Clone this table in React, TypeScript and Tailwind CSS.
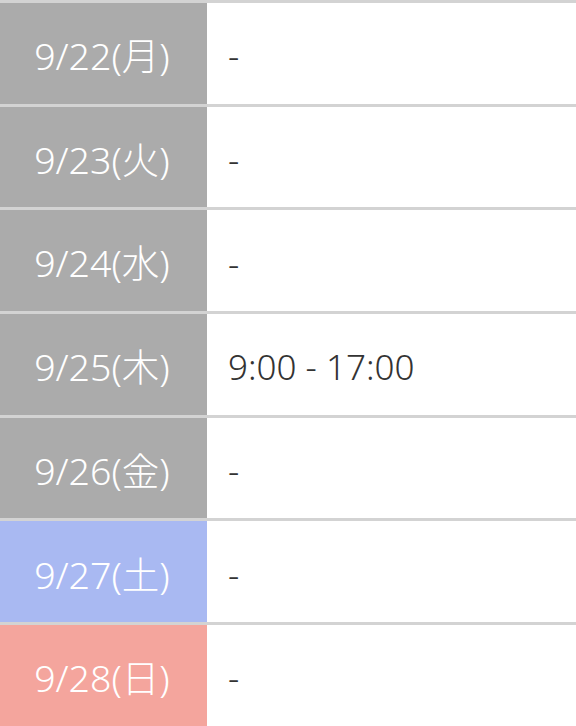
const rows = [
  { date: '9/22(月)', time: '-', tone: 'bg-[#ababab]' },
  { date: '9/23(火)', time: '-', tone: 'bg-[#ababab]' },
  { date: '9/24(水)', time: '-', tone: 'bg-[#ababab]' },
  { date: '9/25(木)', time: '9:00 - 17:00', tone: 'bg-[#ababab]' },
  { date: '9/26(金)', time: '-', tone: 'bg-[#ababab]' },
  { date: '9/27(土)', time: '-', tone: 'bg-[#a9b9f2]' },
  { date: '9/28(日)', time: '-', tone: 'bg-[#f4a59d]' },
]

export default function App() {
  return (
    <div
      className="w-[576px] h-[726px] overflow-hidden bg-white"
      style={{ fontFamily: '"Noto Sans", "Noto Sans CJK JP", sans-serif' }}
    >
      {rows.map((r) => (
        <div key={r.date} className="flex h-[103.7px] border-t-[3px] border-[#d3d3d3]">
          <div
            className={`${r.tone} w-[207px] shrink-0 flex items-center justify-center pt-[5px] pr-[3px] text-white text-[37.5px] font-light leading-none`}
          >
            {r.date}
          </div>
          <div className="flex-1 flex items-center pl-[21px] pt-[5px] text-[#333333] text-[35px] font-light leading-none">
            {r.time}
          </div>
        </div>
      ))}
    </div>
  )
}
